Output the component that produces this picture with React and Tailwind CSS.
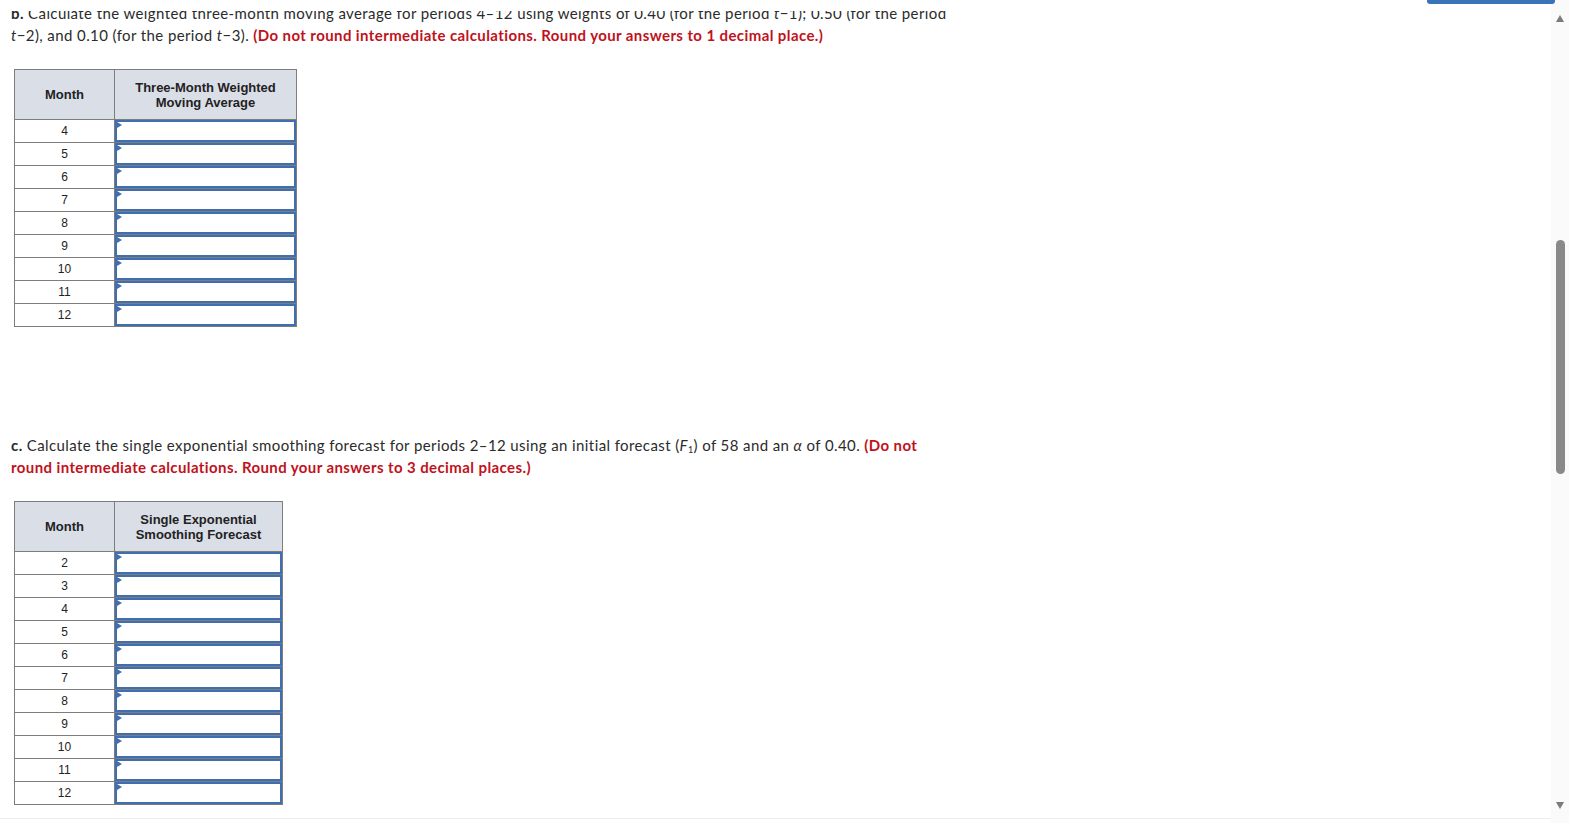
const partB = [4, 5, 6, 7, 8, 9, 10, 11, 12];
const partC = [2, 3, 4, 5, 6, 7, 8, 9, 10, 11, 12];

function AnswerCell() {
  return (
    <td className="border border-[#7d7d7d] p-0">
      <div className="relative h-[22px] border-2 border-[#3f6fb0] bg-white">
        <span className="absolute left-0 top-0 h-0 w-0 border-y-[3px] border-l-[5px] border-y-transparent border-l-[#3f6fb0]" />
      </div>
    </td>
  );
}

function AnswerTable({ title1, title2, months, width }) {
  return (
    <table
      className="ml-[14px] border-collapse font-['Liberation_Sans',Arial,sans-serif] text-[12px] tracking-normal text-[#222]"
      style={{ width }}
    >
      <thead>
        <tr className="h-[50px] bg-[#dadee7] text-[13px]">
          <th className="w-[100px] border border-[#7d7d7d] font-bold">Month</th>
          <th className="border border-[#7d7d7d] font-bold leading-[15px]">
            {title1}
            <br />
            {title2}
          </th>
        </tr>
      </thead>
      <tbody>
        {months.map((m) => (
          <tr key={m} className="h-[23px]">
            <td className="border border-[#7d7d7d] p-0 text-center">{m}</td>
            <AnswerCell />
          </tr>
        ))}
      </tbody>
    </table>
  );
}

export default function App() {
  return (
    <div className="flex h-[823px] w-[1569px] overflow-hidden bg-white font-['Lato','Liberation_Sans',sans-serif] text-[15px] tracking-[0.4px] text-[#2b2b2b]">
      <div className="flex flex-1 flex-col">
        <div className="relative z-10 flex h-[11px] justify-end bg-white">
          <div className="mr-[-4px] h-[4px] w-[128px] rounded-b-[3px] bg-[#3874ba]" />
        </div>
        <div className="flex-1 overflow-hidden">
          <div className="-mt-[9px] pl-[11px] leading-[22px]">
            <p className="whitespace-nowrap">
              <b>b.</b> Calculate the weighted three-month moving average for periods 4–12 using weights of
              0.40 (for the period <i>t</i>−1); 0.50 (for the period
              <br />
              <i>t</i>−2), and 0.10 (for the period <i>t</i>−3).{" "}
              <b className="text-[#c0121c]">(Do not round intermediate calculations. Round your answers to 1 decimal place.)</b>
            </p>
          </div>
          <div className="mt-[23px]">
            <AnswerTable title1="Three-Month Weighted" title2="Moving Average" months={partB} width={283} />
          </div>
          <div className="mt-[107px] pl-[11px] leading-[22px]">
            <p className="whitespace-nowrap">
              <b>c.</b> Calculate the single exponential smoothing forecast for periods 2–12 using an initial
              forecast (<i>F</i>
              <sub className="text-[9px]">1</sub>) of 58 and an <i>α</i> of 0.40.{" "}
              <b className="text-[#c0121c]">
                (Do not
                <br />
                round intermediate calculations. Round your answers to 3 decimal places.)
              </b>
            </p>
          </div>
          <div className="mt-[23px]">
            <AnswerTable title1="Single Exponential" title2="Smoothing Forecast" months={partC} width={269} />
          </div>
          <div className="mt-[13px] h-px w-full bg-[#ececec]" />
        </div>
      </div>
      <div className="flex w-[18px] flex-col items-center bg-[#fafafa] pt-[15px] pb-[14px]">
        <span className="h-0 w-0 border-x-[4px] border-b-[7px] border-x-transparent border-b-[#7a7a7a]" />
        <div className="mt-[218px] h-[234px] w-[9px] rounded-full bg-[#898989]" />
        <div className="flex-1" />
        <span className="h-0 w-0 border-x-[4px] border-t-[7px] border-x-transparent border-t-[#7a7a7a]" />
      </div>
    </div>
  );
}
